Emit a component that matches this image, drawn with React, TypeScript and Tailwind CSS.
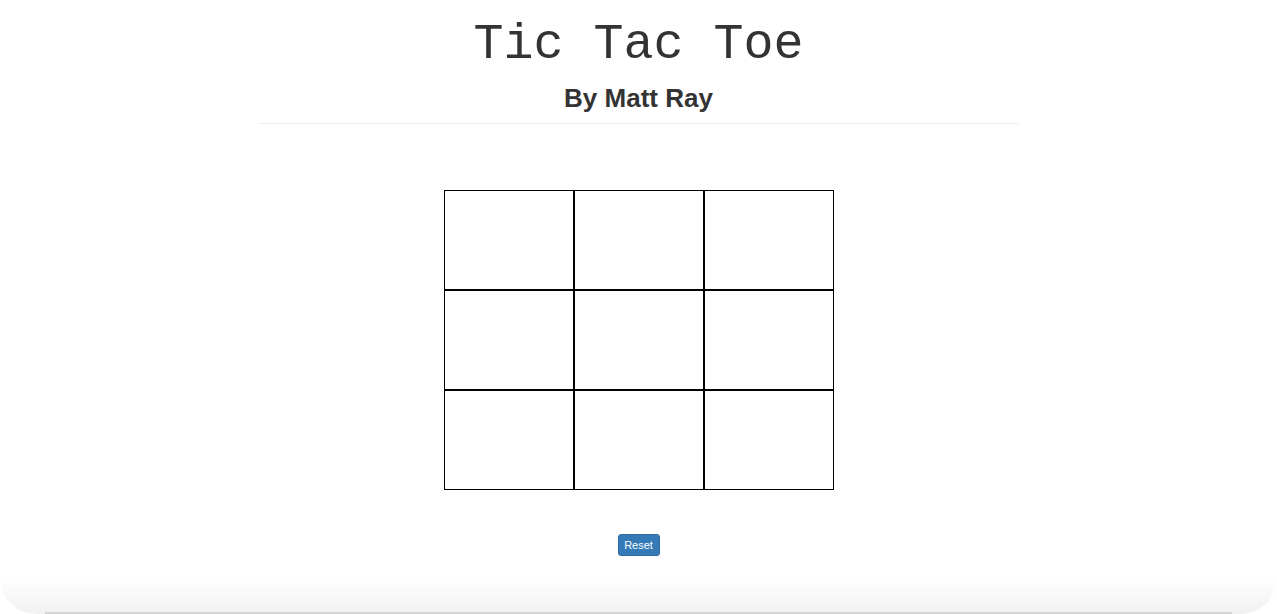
import { useState } from 'react';

type Mark = 'X' | 'O' | null;

const Cell = ({ value, onClick }: { value: Mark; onClick: () => void }) => (
    <button
        onClick={onClick}
        className="h-[100px] w-[130px] border border-black bg-white text-[60px] leading-none text-[#333] [font-family:'Liberation_Mono',monospace]"
    >
        {value}
    </button>
);

const App = () => {
    const [cells, setCells] = useState<Mark[]>(Array(9).fill(null));
    const [turn, setTurn] = useState<'X' | 'O'>('X');

    const play = (i: number) => {
        if (cells[i]) return;
        const next = [...cells];
        next[i] = turn;
        setCells(next);
        setTurn(turn === 'X' ? 'O' : 'X');
    };

    const reset = () => {
        setCells(Array(9).fill(null));
        setTurn('X');
    };

    return (
        <div className="flex h-[614px] flex-col items-center overflow-hidden bg-white text-[#333] [font-family:'Liberation_Sans',Arial,sans-serif]">
            {/* header */}
            <header className="flex w-[760px] flex-col items-center border-b border-[#eee] pb-[10px]">
                <h1 className="mt-[17px] text-[50px] leading-[55px] [font-family:'Liberation_Mono','Courier_New',monospace]">
                    Tic Tac Toe
                </h1>
                <h3 className="mt-[12px] text-[26px] font-bold leading-[29px]">By Matt Ray</h3>
            </header>

            {/* board */}
            <div className="mt-[66px] grid grid-cols-3">
                {cells.map((c, i) => (
                    <Cell key={i} value={c} onClick={() => play(i)} />
                ))}
            </div>

            <button
                onClick={reset}
                className="mt-[44px] h-[22px] w-[42px] rounded-[3px] border border-[#2e6da4] bg-[#337ab7] text-[11px] text-white"
            >
                Reset
            </button>

            {/* window shadow at the bottom of the capture */}
            <div className="mt-auto flex h-[36px] w-full flex-col justify-end rounded-b-[60px] bg-gradient-to-b from-white to-[#f1f1f1]">
                <div className="mx-[45px] h-[2px] bg-[#d6d6d6]" />
            </div>
        </div>
    );
};

export default App;
